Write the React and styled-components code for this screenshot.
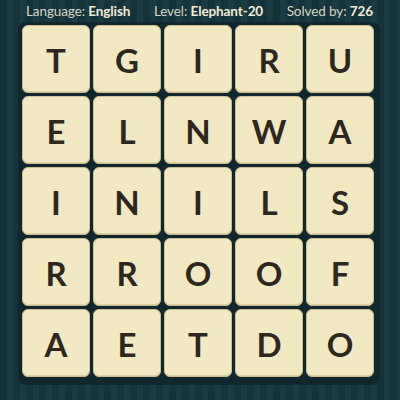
import React from 'react'
import styled, { createGlobalStyle } from 'styled-components'

const GlobalStyle = createGlobalStyle`
  html, body {
    margin: 0;
    padding: 0;
  }
  body {
    width: 400px;
    height: 400px;
    overflow: hidden;
    font-family: Lato, "Noto Sans", sans-serif;
    background-color: #163740;
    background-image: repeating-linear-gradient(
      90deg,
      #15333b 0px,
      #15333b 7px,
      #1a3b43 7px,
      #1a3b43 13px
    );
  }
`

const letters = [
  ['T', 'G', 'I', 'R', 'U'],
  ['E', 'L', 'N', 'W', 'A'],
  ['I', 'N', 'I', 'L', 'S'],
  ['R', 'R', 'O', 'O', 'F'],
  ['A', 'E', 'T', 'D', 'O'],
]

const App = () => {
  return (
    <>
      <GlobalStyle />
      <Page>
        <Header>
          <Stat>Language: <Value>English</Value></Stat>
          <Stat>Level: <Value>Elephant-20</Value></Stat>
          <Stat>Solved by: <Value>726</Value></Stat>
        </Header>
        <Board>
          <Grid>
            {letters.flat().map((l, i) => (
              <Tile key={i}>{l}</Tile>
            ))}
          </Grid>
        </Board>
      </Page>
    </>
  )
}

const Page = styled.div`
  width: 400px;
  height: 400px;
  display: flex;
  flex-direction: column;
`

const Header = styled.div`
  height: 22px;
  display: flex;
  align-items: center;
  justify-content: space-between;
  padding: 0 27px 0 26px;
  box-sizing: border-box;
`

const Stat = styled.div`
  color: #d3d6c4;
  font-size: 13.5px;
  font-weight: 400;
  letter-spacing: -0.1px;
  white-space: nowrap;
`

const Value = styled.span`
  color: #f1ecd6;
  font-weight: 700;
`

const Board = styled.div`
  align-self: flex-start;
  margin-left: 18px;
  padding: 3px 6px 8px 4px;
  background: #10272d;
  border-radius: 8px;
`

const Grid = styled.div`
  display: grid;
  grid-template-columns: repeat(5, 68px);
  grid-auto-rows: 68px;
  gap: 3px;
`

const Tile = styled.div`
  display: flex;
  align-items: center;
  justify-content: center;
  background: #f2e9c3;
  border: 1px solid #cdbf93;
  box-sizing: border-box;
  border-radius: 6px;
  box-shadow: inset 0 -1px 0 #dccf9f;
  color: #2e2720;
  font-size: 33px;
  font-weight: 700;
  padding-top: 1px;
`

export default App
